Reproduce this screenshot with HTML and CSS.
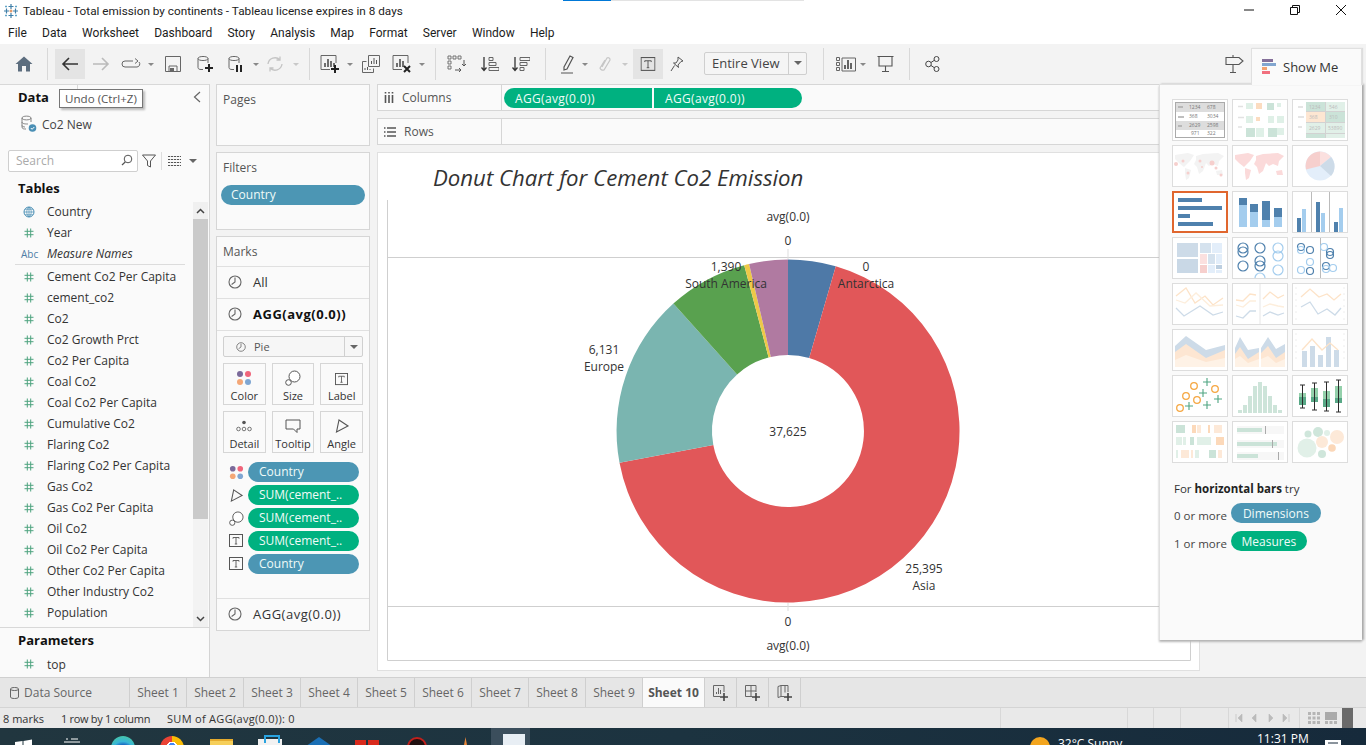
FILE: index.html
```html
<!DOCTYPE html>
<html lang="en">
<head>
<meta charset="utf-8">
<title>Tableau</title>
<link rel="stylesheet" href="styles.css">
</head>
<body>
<svg class="defs" width="0" height="0">
  <symbol id="i-pie" viewBox="0 0 14 14"><circle cx="7" cy="7" r="6" fill="none" stroke="#666" stroke-width="1.1"/><path d="M7 2.500V7L3.600 9.500" fill="none" stroke="#666" stroke-width="1.1"/></symbol>
  <symbol id="i-t" viewBox="0 0 14 14"><rect x=".5" y=".5" width="13" height="12" fill="none" stroke="#555"/><path d="M4 3.500h6M7 3.500v6.500M5.800 10h2.400M4 3.500v1.200M10 3.500v1.200" fill="none" stroke="#555" stroke-width=".9"/></symbol>
  <symbol id="i-dots" viewBox="0 0 16 16"><circle cx="4" cy="4" r="3" fill="#7b6a9a"/><circle cx="12" cy="4" r="3" fill="#f0657b"/><circle cx="4" cy="12" r="3" fill="#f4a777"/><circle cx="12" cy="12" r="3" fill="#7fa6d2"/></symbol>
  <symbol id="i-size" viewBox="0 0 16 16"><circle cx="9.500" cy="6.500" r="5.500" fill="#fff" stroke="#555"/><circle cx="3.500" cy="12.500" r="2.800" fill="#fff" stroke="#555"/></symbol>
  <symbol id="i-angle" viewBox="0 0 16 16"><path d="M5 2L14 8L2.500 14Z" fill="none" stroke="#555" stroke-width="1.100"/></symbol>
  <symbol id="i-hash" viewBox="0 0 10 10"><path d="M3.300.5v9M6.700.5v9M.5 3.300h9M.5 6.700h9" fill="none" stroke="#4ea37f" stroke-width="1"/></symbol>
  <symbol id="i-world" viewBox="0 0 56 42"><path d="M3 10L16 8L22 10L18 16L14 20L12 22L7 18L3 14ZM13 23L19 25L17 33L14 35L13 28ZM24 11L31 9L46 8L52 11L47 16L46 21L41 19L37 21L34 18L31 26L27 29L25 22L22 19L24 15ZM44 26L50 25L51 30L45 30Z"/></symbol>
</svg>

<header class="titlebar">
  <div class="progress"><span class="progress-fill"></span></div>
  <svg class="app-logo" viewBox="0 0 16 16" width="16" height="16"><path d="M8 1v5M5.500 3.500h5M8 10v5M5.500 12.500h5M1 8h5M3.500 5.500v5M10 8h5M12.500 5.500v5" stroke="#3f7fa8" stroke-width="1.200"/><path d="M3 2.500v2M2 3.500h2M13 2.500v2M12 3.500h2M3 11.500v2M2 12.500h2M13 11.500v2M12 12.500h2" stroke="#5aa0c4" stroke-width=".9"/><path d="M6.500 8h3M8 6.500v3" stroke="#d9783a" stroke-width="1"/></svg>
  <span class="app-title">Tableau - Total emission by continents - Tableau license expires in 8 days</span>
  <div class="win-controls">
    <svg width="12" height="12" viewBox="0 0 12 12"><path d="M1 6h10" stroke="#111" stroke-width="1"/></svg>
    <svg width="12" height="12" viewBox="0 0 12 12"><path d="M1.500 3.500h7v7h-7zM3.500 3.500v-2h7v7h-2" fill="none" stroke="#111"/></svg>
    <svg width="12" height="12" viewBox="0 0 12 12"><path d="M1 1l10 10M11 1L1 11" stroke="#111" stroke-width="1"/></svg>
  </div>
</header>

<nav class="menubar">
  <span>File</span><span>Data</span><span>Worksheet</span><span>Dashboard</span><span>Story</span><span>Analysis</span><span>Map</span><span>Format</span><span>Server</span><span>Window</span><span>Help</span>
</nav>

<div class="toolbar">
  <div class="tool w30 first"><svg width="18" height="16" viewBox="0 0 18 16"><path d="M9 .5L17.500 8H15v7.500h-4V10H7v5.500H3V8H.5Z" fill="#5c6d7e"/></svg></div>
  <i class="sep m8"></i>
  <div class="tool w30 hover m7"><svg width="18" height="16" viewBox="0 0 18 16"><path d="M17 8H2M8 2L2 8l6 6" fill="none" stroke="#333" stroke-width="1.600"/></svg></div>
  <div class="tool w32"><svg width="18" height="16" viewBox="0 0 18 16"><path d="M1 8h15M10 2l6 6-6 6" fill="none" stroke="#bbb" stroke-width="1.600"/></svg></div>
  <div class="tool w28"><svg width="20" height="12" viewBox="0 0 20 12"><path d="M12 3H4a3 3 0 0 0 0 6h12a3 3 0 0 0 2-5M14 .5L17 3l-3 2.500" fill="none" stroke="#666"/></svg></div>
  <div class="tool w12"><b class="caret"></b></div>
  <div class="tool w32"><svg width="16" height="16" viewBox="0 0 16 16"><path d="M.5.500h15v15H.5zM4 15.500V10h8v5.500" fill="none" stroke="#666"/><rect x="5" y="12" width="4" height="3.500" fill="#666"/></svg></div>
  <div class="tool w32"><svg width="16" height="18" viewBox="0 0 16 18"><path d="M1 3.500v9c0 1.500 1.500 2 3 2h2M11 3.500V8M1 3.500C1 .8 11 .8 11 3.500S1 6.200 1 3.500Z" fill="none" stroke="#666"/><path d="M12 9v8M8 13h8" stroke="#222" stroke-width="2"/></svg></div>
  <div class="tool w30"><svg width="16" height="18" viewBox="0 0 16 18"><path d="M1 3.500v9c0 1.500 1.500 2 3 2h2M11 3.500V8M1 3.500C1 .8 11 .8 11 3.500S1 6.200 1 3.500Z" fill="none" stroke="#666"/><path d="M9 10v7M13 10v7" stroke="#222" stroke-width="2"/></svg></div>
  <div class="tool w10"><b class="caret"></b></div>
  <div class="tool w28"><svg width="18" height="16" viewBox="0 0 18 16"><path d="M2 8a7 7 0 0 1 12-4M16 8a7 7 0 0 1-12 4M14 .5V4h-3.500M4 15.500V12h3.500" fill="none" stroke="#c4c4c4" stroke-width="1.300"/></svg></div>
  <div class="tool w14"><b class="caret pale"></b></div>
  <i class="sep m6"></i>
  <div class="tool w32 m4"><svg width="20" height="20" viewBox="0 0 20 20"><path d="M16 9V1.500H1v14h9" fill="none" stroke="#666"/><path d="M5 13V9M8 13V5M11 13V7M14 13V9" stroke="#444" stroke-width="1.500"/><path d="M15 11v8M11 15h8" stroke="#222" stroke-width="2"/></svg></div>
  <div class="tool w8"><b class="caret"></b></div>
  <div class="tool w34"><svg width="18" height="18" viewBox="0 0 18 18"><path d="M6.500.5h11v11h-11zM.5 6.500h4M.5 6.500v11h11v-4" fill="none" stroke="#666"/><path d="M9.500 9V6M12 9V3M14.500 9V5M3 15v-2M5.500 15v-3M8 15v-1" stroke="#555"/></svg></div>
  <div class="tool w28"><svg width="20" height="20" viewBox="0 0 20 20"><path d="M16 9V1.500H1v14h9" fill="none" stroke="#666"/><path d="M5 13V9M8 13V5M11 13V7" stroke="#444" stroke-width="1.500"/><path d="M12 12l6 6M18 12l-6 6" stroke="#222" stroke-width="2"/></svg></div>
  <div class="tool w12"><b class="caret"></b></div>
  <i class="sep m7"></i>
  <div class="tool w32 m5"><svg width="20" height="18" viewBox="0 0 20 18"><path d="M1 1h3v3H1zM6 1h3v3H6zM11 1h3v3h-3zM1 6h3v3H1zM1 11h3v3H1z" fill="none" stroke="#666" stroke-width=".9"/><path d="M17 5v6l-2-2M19 9l-2 2M8 15h6l-2-2M12 17l2-2" fill="none" stroke="#555"/></svg></div>
  <div class="tool w34"><svg width="18" height="16" viewBox="0 0 18 16"><path d="M3 1v13M.5 11.500L3 14.500l2.500-3" fill="none" stroke="#333" stroke-width="1.300"/><path d="M8 1.500h4v3H8zM8 6.500h7v3H8zM8 11.500h10v3H8z" fill="none" stroke="#666"/></svg></div>
  <div class="tool w28"><svg width="18" height="16" viewBox="0 0 18 16"><path d="M3 1v13M.5 11.500L3 14.500l2.500-3" fill="none" stroke="#333" stroke-width="1.300"/><path d="M8 1.500h10v3H8zM8 6.500h7v3H8zM8 11.500h4v3H8z" fill="none" stroke="#666"/></svg></div>
  <i class="sep m10"></i>
  <div class="tool w28 m8"><svg width="14" height="20" viewBox="0 0 14 20"><path d="M3 13L9 2l3 1.500L6 15l-3 1zM0 19h12" fill="none" stroke="#555" stroke-width="1.200"/></svg></div>
  <div class="tool w6"><b class="caret"></b></div>
  <div class="tool w34"><svg width="12" height="18" viewBox="0 0 12 18"><path d="M3 12L8 3a2 2 0 0 1 3 2L5 15a3 3 0 0 1-4-2L6 5" fill="none" stroke="#c6c6c6" stroke-width="1.200"/></svg></div>
  <div class="tool w6"><b class="caret pale"></b></div>
  <div class="tool w30 hover m5"><svg width="16" height="15" viewBox="0 0 14 14"><use href="#i-t"/></svg></div>
  <div class="tool w28"><svg width="14" height="16" viewBox="0 0 14 16"><path d="M8 1l5 4-2 .5-3 3.500.5 2.500L3.500 7 6 7l2-3zM4.500 9.500L1 15" fill="none" stroke="#555"/></svg></div>
  <div class="select m13"><span>Entire View</span><span class="select-arrow"><b class="caret strong"></b></span></div>
  <i class="sep m16"></i>
  <div class="tool w28 m8"><svg width="20" height="15" viewBox="0 0 20 15"><path d="M.5.500h3v3h-3zM.5 5.500h3v3h-3zM.5 10.500h3v3h-3zM6 1h13.500v13H6z" fill="none" stroke="#666"/><path d="M9 12V8M12 12V3M15 12V6" stroke="#555" stroke-width="1.800"/></svg></div>
  <div class="tool w6"><b class="caret"></b></div>
  <div class="tool w38"><svg width="17" height="16" viewBox="0 0 17 16"><path d="M.5.500h16M2 .5v9.500h13V.5M8.500 10v5M5 15.500h7" fill="none" stroke="#555" stroke-width="1.100"/></svg></div>
  <i class="sep m5"></i>
  <div class="tool w32 m6"><svg width="15" height="16" viewBox="0 0 15 16"><circle cx="3.500" cy="8" r="2.800" fill="none" stroke="#444"/><circle cx="11.500" cy="3" r="2.500" fill="none" stroke="#444"/><circle cx="11.500" cy="13" r="2.500" fill="none" stroke="#444"/><path d="M6 6.500L9.300 4.300M6 9.500l3.300 2.200" stroke="#444"/></svg></div>
  <div class="tool w28 push"><svg width="19" height="20" viewBox="0 0 19 20"><path d="M1 3.500h13l4 3.500-4 3.500H1zM8 1v2.500M8 10.500V18M5 18.500h6" fill="none" stroke="#555" stroke-width="1.100"/></svg></div>
  <div class="showme-tab"><svg width="15" height="16" viewBox="0 0 15 16"><rect width="11" height="3" fill="#85709a"/><rect y="4" width="14" height="3" fill="#82a6cf"/><rect y="8" width="5" height="3" fill="#f3a270"/><rect y="12" width="8" height="3" fill="#f1707e"/></svg><span>Show Me</span></div>
</div>

<main class="main">
  <aside class="data-pane">
    <div class="data-head"><b>Data</b><svg width="8" height="12" viewBox="0 0 8 12"><path d="M7 1L1.500 6 7 11" fill="none" stroke="#666" stroke-width="1.200"/></svg></div>
    <div class="source">
      <svg width="18" height="18" viewBox="0 0 18 18"><path d="M2 3v9c0 2 2 2 4 2M11 3v4M2 3c0-2.500 9-2.500 9 0S2 5.500 2 3ZM2 7c0 2 4 2 6 2M2 10.500c0 1 2 1.500 3 1.500" fill="none" stroke="#777" stroke-width=".9"/><circle cx="12.500" cy="13" r="3.800" fill="#4a8fb5"/><path d="M10.800 13l1.300 1.300 2.200-2.300" fill="none" stroke="#fff"/></svg>
      <span>Co2 New</span>
    </div>
    <div class="search-row">
      <div class="search"><span>Search</span><svg width="12" height="12" viewBox="0 0 12 12"><circle cx="7" cy="5" r="3.800" fill="none" stroke="#555"/><path d="M4.200 8L1 11" stroke="#555" stroke-width="1.200"/></svg></div>
      <svg class="funnel" width="14" height="14" viewBox="0 0 14 14"><path d="M.5 1h13L8.500 7v6l-3-1.500V7Z" fill="none" stroke="#555"/></svg>
      <i class="mini-sep"></i>
      <svg class="listing" width="13" height="10" viewBox="0 0 13 10"><path d="M0 .5h13M0 3.500h13M0 6.500h13M0 9.500h13" stroke="#555" stroke-dasharray="2.200 .8"/></svg>
      <b class="caret strong"></b>
    </div>
    <h3 class="tables">Tables</h3>
    <div class="fields">
      <ul class="field-list">
        <li><svg width="12" height="12" viewBox="0 0 12 12" class="f-ic"><circle cx="6" cy="6" r="5" fill="none" stroke="#4a8fb5"/><path d="M1 6h10M6 1v10M2 3.200h8M2 8.800h8M6 1C3 3.500 3 8.500 6 11M6 1c3 2.500 3 7.500 0 10" fill="none" stroke="#4a8fb5" stroke-width=".7"/></svg>Country</li>
        <li><svg class="f-ic hash"><use href="#i-hash"/></svg>Year</li>
        <li class="last"><span class="abc">Abc</span><em>Measure Names</em></li>
        <li><svg class="f-ic hash"><use href="#i-hash"/></svg>Cement Co2 Per Capita</li>
        <li><svg class="f-ic hash"><use href="#i-hash"/></svg>cement_co2</li>
        <li><svg class="f-ic hash"><use href="#i-hash"/></svg>Co2</li>
        <li><svg class="f-ic hash"><use href="#i-hash"/></svg>Co2 Growth Prct</li>
        <li><svg class="f-ic hash"><use href="#i-hash"/></svg>Co2 Per Capita</li>
        <li><svg class="f-ic hash"><use href="#i-hash"/></svg>Coal Co2</li>
        <li><svg class="f-ic hash"><use href="#i-hash"/></svg>Coal Co2 Per Capita</li>
        <li><svg class="f-ic hash"><use href="#i-hash"/></svg>Cumulative Co2</li>
        <li><svg class="f-ic hash"><use href="#i-hash"/></svg>Flaring Co2</li>
        <li><svg class="f-ic hash"><use href="#i-hash"/></svg>Flaring Co2 Per Capita</li>
        <li><svg class="f-ic hash"><use href="#i-hash"/></svg>Gas Co2</li>
        <li><svg class="f-ic hash"><use href="#i-hash"/></svg>Gas Co2 Per Capita</li>
        <li><svg class="f-ic hash"><use href="#i-hash"/></svg>Oil Co2</li>
        <li><svg class="f-ic hash"><use href="#i-hash"/></svg>Oil Co2 Per Capita</li>
        <li><svg class="f-ic hash"><use href="#i-hash"/></svg>Other Co2 Per Capita</li>
        <li><svg class="f-ic hash"><use href="#i-hash"/></svg>Other Industry Co2</li>
        <li><svg class="f-ic hash"><use href="#i-hash"/></svg>Population</li>
      </ul>
      <div class="scrollbar">
        <div class="sb-btn"><svg width="9" height="6" viewBox="0 0 9 6"><path d="M1 5l3.500-3.500L8 5" fill="none" stroke="#444" stroke-width="1.500"/></svg></div>
        <div class="sb-thumb"></div>
        <div class="sb-btn bottom"><svg width="9" height="6" viewBox="0 0 9 6"><path d="M1 1l3.500 3.500L8 1" fill="none" stroke="#444" stroke-width="1.500"/></svg></div>
      </div>
    </div>
    <div class="params">
      <h3>Parameters</h3>
      <div class="param"><svg class="f-ic hash"><use href="#i-hash"/></svg>top</div>
    </div>
  </aside>

  <section class="cards">
    <div class="card pages"><h4>Pages</h4></div>
    <div class="card filters"><h4>Filters</h4><div class="pill blue wide">Country</div></div>
    <div class="card marks">
      <h4 class="marks-title">Marks</h4>
      <div class="mark-row"><svg class="pie-ic"><use href="#i-pie"/></svg><span>All</span></div>
      <div class="mark-row bold"><svg class="pie-ic"><use href="#i-pie"/></svg><span class="agg">AGG(avg(0.0))</span></div>
      <div class="mark-select"><svg class="pie-small"><use href="#i-pie"/></svg><span class="ms-label">Pie</span><span class="ms-arrow"><b class="caret strong"></b></span></div>
      <div class="mark-buttons">
        <div class="mbtn"><svg class="mb-ic"><use href="#i-dots"/></svg><span>Color</span></div>
        <div class="mbtn"><svg class="mb-ic"><use href="#i-size"/></svg><span>Size</span></div>
        <div class="mbtn"><svg class="mb-ic t"><use href="#i-t"/></svg><span>Label</span></div>
        <div class="mbtn"><svg class="mb-ic" viewBox="0 0 16 16"><circle cx="8" cy="4.500" r="1.800" fill="#555"/><circle cx="2.500" cy="11" r="1.800" fill="none" stroke="#555" stroke-width=".8"/><circle cx="8" cy="11" r="1.800" fill="none" stroke="#555" stroke-width=".8"/><circle cx="13.500" cy="11" r="1.800" fill="none" stroke="#555" stroke-width=".8"/></svg><span>Detail</span></div>
        <div class="mbtn"><svg class="mb-ic" viewBox="0 0 16 16"><path d="M1 2h14v9h-3v3.500L8.500 11H1Z" fill="none" stroke="#555"/></svg><span>Tooltip</span></div>
        <div class="mbtn"><svg class="mb-ic"><use href="#i-angle"/></svg><span>Angle</span></div>
      </div>
      <div class="encodings">
        <div class="enc"><svg class="enc-ic"><use href="#i-dots"/></svg><div class="pill blue">Country</div></div>
        <div class="enc"><svg class="enc-ic"><use href="#i-angle"/></svg><div class="pill green">SUM(cement_..</div></div>
        <div class="enc"><svg class="enc-ic"><use href="#i-size"/></svg><div class="pill green">SUM(cement_..</div></div>
        <div class="enc"><svg class="enc-ic t"><use href="#i-t"/></svg><div class="pill green">SUM(cement_..</div></div>
        <div class="enc"><svg class="enc-ic t"><use href="#i-t"/></svg><div class="pill blue">Country</div></div>
      </div>
      <div class="mark-row bottom"><svg class="pie-ic"><use href="#i-pie"/></svg><span class="agg">AGG(avg(0.0))</span></div>
    </div>
  </section>

  <section class="workspace">
    <div class="shelf"><div class="shelf-label"><svg width="10" height="11" viewBox="0 0 10 11"><path d="M1.500 3v8M5 3v8M8.500 3v8M1.500 0v1.500M5 0v1.500M8.500 0v1.500" stroke="#555" stroke-width="1.600"/></svg><span>Columns</span></div><div class="shelf-pills"><div class="pill green joined-l">AGG(avg(0.0))</div><div class="pill green joined-r">AGG(avg(0.0))</div></div></div>
    <div class="shelf rows"><div class="shelf-label"><svg width="12" height="10" viewBox="0 0 12 10"><path d="M3 1h9M3 5h9M3 9h9M0 1h1.500M0 5h1.500M0 9h1.500" stroke="#555" stroke-width="1.400"/></svg><span>Rows</span></div></div>
    <div class="viz">
      <svg class="viz-svg" viewBox="377 152 823 519" width="823" height="519">
        <text class="viz-title" x="433" y="186">Donut Chart for Cement Co2 Emission</text>
        <path d="M387.500 200V660.500H1190.500V640M387 257.500H1199M387 606.500H1199" fill="none" stroke="#cfcfcf"/>
        <path d="M788 249v10M788 603v8" stroke="#ddd"/>
        <path fill="#4e79a7" d="M788 259.500A171.500 171.500 0 0 1 835.800 266.300L809.200 358A76 76 0 0 0 788 355Z"/>
        <path fill="#e15759" d="M835.800 266.300A171.500 171.500 0 1 1 619.500 462.800L713.300 445.100A76 76 0 1 0 809.200 358Z"/>
        <path fill="#7ab5b0" d="M619.500 462.800A171.500 171.500 0 0 1 673.400 303.600L737.100 374.500A76 76 0 0 0 713.300 445.100Z"/>
        <path fill="#59a14f" d="M673.400 303.600A171.500 171.500 0 0 1 744.200 265.200L768.600 357.500A76 76 0 0 0 737.100 374.500Z"/>
        <path fill="#edc948" d="M744.200 265.200A171.500 171.500 0 0 1 749.100 264L770.800 357A76 76 0 0 0 768.600 357.500Z"/>
        <path fill="#b07aa1" d="M749.100 264A171.500 171.500 0 0 1 788 259.500L788 355A76 76 0 0 0 770.800 357Z"/>
        <g class="viz-label">
          <text x="788" y="221">avg(0.0)</text><text x="788" y="245">0</text>
          <text x="726" y="271">1,390</text><text x="726" y="288">South America</text>
          <text x="866" y="271">0</text><text x="866" y="288">Antarctica</text>
          <text x="604" y="354">6,131</text><text x="604" y="371">Europe</text>
          <text x="788" y="436">37,625</text>
          <text x="924" y="573">25,395</text><text x="924" y="590">Asia</text>
          <text x="788" y="626">0</text><text x="788" y="650">avg(0.0)</text>
        </g>
      </svg>
    </div>
  </section>

  <div class="tooltip">Undo (Ctrl+Z)</div>

  <aside class="showme">
    <div class="thumbs">
      <svg class="thumb" viewBox="0 0 56 42"><rect x="3" y="3" width="50" height="36" fill="#fff"/><path d="M3 3h50v10H3zM3 22h50v9H3z" fill="#ddd"/><rect x="3.500" y="3.500" width="49" height="35" fill="none" stroke="#aaa"/><path d="M6 8h5M6 18h6M6 27h4" stroke="#aaa" stroke-width="1.500"/><g class="tt"><text x="17" y="10">1234</text><text x="35" y="10">678</text><text x="17" y="19">368</text><text x="35" y="19">3034</text><text x="17" y="28">2629</text><text x="35" y="28">2598</text><text x="19" y="36">971</text><text x="35" y="36">322</text></g></svg>
      <svg class="thumb" viewBox="0 0 56 42"><g fill="#dff0e7"><rect x="14" y="4" width="7" height="6"/><rect x="45" y="4" width="4" height="4"/><rect x="14" y="17" width="7" height="7"/><rect x="36" y="17" width="6" height="7"/><rect x="45" y="17" width="7" height="7"/><rect x="24" y="29" width="8" height="9"/><rect x="45" y="29" width="7" height="7"/></g><g fill="#cbe3d8"><rect x="35" y="4" width="7" height="7"/><rect x="14" y="29" width="9" height="9"/><rect x="36" y="29" width="9" height="9"/></g><g fill="#fbdcc0"><rect x="24" y="4" width="6" height="6"/><rect x="24" y="18" width="4" height="4"/></g><path d="M6 7.500h5M6 18.500h6M6 28h4" stroke="#e2e2e2" stroke-width="1.500"/></svg>
      <svg class="thumb" viewBox="0 0 56 42"><rect x="14" y="3" width="39" height="36" fill="#d2d2d2"/><rect x="14" y="3" width="19" height="9" fill="#cbe3d8"/><rect x="34" y="3" width="19" height="9" fill="#e1f0e8"/><rect x="14" y="13" width="19" height="10" fill="#fde6d2"/><rect x="34" y="13" width="19" height="10" fill="#cbe3d8"/><rect x="14" y="24" width="19" height="10" fill="#e1f0e8"/><rect x="34" y="24" width="19" height="10" fill="#e1f0e8"/><rect x="14" y="35" width="19" height="4" fill="#cbe3d8"/><rect x="34" y="35" width="19" height="4" fill="#e1f0e8"/><path d="M6 8h5M6 18h6M6 28h4" stroke="#ddd" stroke-width="1.500"/><g class="tt pale"><text x="17" y="10">1234</text><text x="37" y="10">546</text><text x="17" y="20">368</text><text x="37" y="20">310</text><text x="17" y="31">2629</text><text x="36" y="31">53890</text></g></svg>
      <svg class="thumb" viewBox="0 0 56 42"><use href="#i-world" fill="#f3f3f3"/><g fill="#f6cfcd"><circle cx="4" cy="19" r="2"/><circle cx="11" cy="16" r="1.500"/><circle cx="40" cy="18" r="2.500"/><circle cx="28" cy="16" r="1.500"/><circle cx="44" cy="23" r="1.500"/><circle cx="16" cy="28" r="1.500"/><circle cx="49" cy="30" r="1.500"/><circle cx="30" cy="22" r="1"/></g></svg>
      <svg class="thumb" viewBox="0 0 56 42"><use href="#i-world" fill="#fbdada"/></svg>
      <svg class="thumb" viewBox="0 0 56 42"><circle cx="28" cy="21" r="14.500" fill="#e3eefa"/><path d="M28 21V6.500A14.500 14.500 0 0 1 39 12Z" fill="#fbe0df"/><path d="M28 21V6.500A14.500 14.500 0 0 0 14 24.500Z" fill="#f6cfcd"/><path d="M28 21L39 12A14.500 14.500 0 0 1 39 31Z" fill="#cddbe8"/></svg>
      <svg class="thumb selected" viewBox="0 0 56 42"><g fill="#4f81ad"><rect x="6" y="7" width="24" height="4"/><rect x="6" y="15" width="44" height="4"/><rect x="6" y="23" width="12" height="4"/><rect x="6" y="31" width="35" height="4"/></g></svg>
      <svg class="thumb" viewBox="0 0 56 42"><g fill="#a4cdee"><rect x="7" y="14" width="8" height="22"/><rect x="18" y="21" width="8" height="15"/><rect x="30" y="29" width="8" height="7"/><rect x="42" y="26" width="8" height="10"/></g><g fill="#4f81ad"><rect x="7" y="7" width="8" height="7"/><rect x="18" y="13" width="8" height="8"/><rect x="30" y="10" width="8" height="19"/><rect x="42" y="17" width="8" height="9"/></g></svg>
      <svg class="thumb" viewBox="0 0 56 42"><path d="M19.500 1v40M37.500 1v40" stroke="#bbb"/><g fill="#4f81ad"><rect x="5" y="27" width="4" height="14"/><rect x="24" y="11" width="4" height="30"/><rect x="42" y="31" width="4" height="10"/></g><g fill="#a4cdee"><rect x="10" y="18" width="4" height="23"/><rect x="29" y="22" width="4" height="19"/><rect x="47" y="17" width="4" height="24"/></g></svg>
      <svg class="thumb" viewBox="0 0 56 42"><rect x="5" y="6" width="21" height="14" fill="#cddbe8"/><rect x="5" y="22" width="21" height="14" fill="#c9d8e6"/><rect x="28" y="6" width="11" height="10" fill="#d5e2ee"/><rect x="40" y="6" width="10" height="10" fill="#e3eefa"/><rect x="28" y="17" width="7" height="10" fill="#fbe0df"/><rect x="36" y="17" width="7" height="10" fill="#d5e2ee"/><rect x="44" y="17" width="6" height="10" fill="#e3eefa"/><rect x="28" y="28" width="7" height="8" fill="#f6cfcd"/><rect x="36" y="28" width="7" height="8" fill="#e3eefa"/><rect x="44" y="28" width="6" height="4" fill="#bdcfe0"/><rect x="44" y="33" width="6" height="3" fill="#e3eefa"/></svg>
      <svg class="thumb" viewBox="0 0 56 42"><g fill="none" stroke-width="1.200"><g stroke="#4f81ad"><circle cx="11" cy="11" r="5"/><circle cx="11" cy="15" r="5"/><circle cx="28" cy="11" r="5"/><circle cx="11" cy="29" r="5"/><circle cx="28" cy="24" r="5"/><circle cx="28" cy="29" r="5"/></g><g stroke="#a4cdee"><circle cx="46" cy="11" r="5"/><circle cx="46" cy="19" r="5"/><circle cx="46" cy="33" r="5"/><circle cx="28" cy="41" r="5"/></g></g></svg>
      <svg class="thumb" viewBox="0 0 56 42"><path d="M28.500 1v40" stroke="#bbb"/><g fill="none" stroke-width="1.200"><g stroke="#4f81ad"><circle cx="9" cy="10" r="3.500"/><circle cx="18" cy="13" r="3.500"/><circle cx="18" cy="34" r="3.500"/><circle cx="38" cy="15" r="3.500"/><circle cx="38" cy="18" r="3.500"/><circle cx="34" cy="29" r="3.500"/></g><g stroke="#a4cdee"><circle cx="9" cy="13" r="3.500"/><circle cx="9" cy="33" r="3.500"/><circle cx="18" cy="25" r="3.500"/><circle cx="32" cy="10" r="3.500"/><circle cx="34" cy="32" r="3.500"/><circle cx="41" cy="31" r="3.500"/></g></g></svg>

      <svg class="thumb" viewBox="0 0 56 42"><g fill="none" stroke-width="1.300"><path d="M4 13L14 5L23 20L33 13L41 22L51 15" stroke="#fde3c8"/><path d="M4 17L13 20L24 10L38 23L51 22" stroke="#fdeedc"/><path d="M4 25L12 33L28 23L41 32L51 29" stroke="#cddbe8"/></g></svg>
      <svg class="thumb" viewBox="0 0 56 42"><path d="M28 1v40" stroke="#e6e6e6"/><g fill="none" stroke-width="1.300"><path d="M4 17L11 18L18 11L24 12M31 16L38 9L46 15L52 12" stroke="#fde3c8"/><path d="M4 22L11 24L18 18L24 18M31 24L38 21L46 23L52 24" stroke="#fdeedc"/><path d="M4 33L11 35L18 28L24 28M31 33L38 29L46 32L52 30" stroke="#cddbe8"/></g></svg>
      <svg class="thumb" viewBox="0 0 56 42"><path d="M3 5h2M3 11h2M3 17h2M3 23h2M3 29h2M51 5h2M51 11h2M51 17h2M51 23h2M51 29h2M3 36h2M51 36h2" stroke="#eee"/><g fill="none" stroke-width="1.300"><path d="M9 14L18 6L27 14L35 11L42 17L49 11" stroke="#fde3c8"/><path d="M9 24L18 19L26 31L35 26L43 32L49 25" stroke="#cddbe8"/></g></svg>

      <svg class="thumb" viewBox="0 0 56 42"><path d="M3 17L14 7L34 21L53 16V38H3Z" fill="#cddbe8"/><path d="M3 23L14 15L34 29L53 21V38H3Z" fill="#fde6d2"/><path d="M3 31L14 26L34 33L53 29V38H3Z" fill="#fef2e6"/></svg>
      <svg class="thumb" viewBox="0 0 56 42"><path d="M3 19L8 8L16 21L27 19V38H3ZM29 19L36 8L44 20L53 15V38H29Z" fill="#cddbe8"/><path d="M3 25L8 18L16 30L27 23V38H3ZM29 24L36 17L44 29L53 23V38H29Z" fill="#fde6d2"/><path d="M3 30L8 27L16 34L27 30V38H3ZM29 30L36 27L44 34L53 30V38H29Z" fill="#fef2e6"/></svg>
      <svg class="thumb" viewBox="0 0 56 42"><g fill="#cddbe8"><rect x="10" y="22" width="5" height="16"/><rect x="18" y="17" width="5" height="21"/><rect x="26" y="26" width="5" height="12"/><rect x="34" y="8" width="5" height="30"/><rect x="42" y="21" width="5" height="17"/></g><path d="M3 5h2M3 11h2M3 17h2M3 23h2M3 29h2M51 5h2M51 11h2M51 17h2M51 23h2M51 29h2" stroke="#eee"/><path d="M10 21L20 10L30 21L38 14L46 21" fill="none" stroke="#fde3c8" stroke-width="1.300"/></svg>

      <svg class="thumb" viewBox="0 0 56 42"><g fill="none" stroke="#f5a742" stroke-width="1.300"><circle cx="22" cy="11" r="3.300"/><circle cx="43" cy="14" r="3.300"/><circle cx="14" cy="21" r="3.300"/><circle cx="25" cy="25" r="3.300"/><circle cx="8" cy="33" r="3.300"/></g><path d="M35 3v8M31 7h8M31 14v8M27 18h8M46 20v8M42 24h8M17 27v8M13 31h8M35 26v8M31 30h8" stroke="#4fa582" stroke-width="1.100"/></svg>
      <svg class="thumb" viewBox="0 0 56 42"><g fill="#cde4d9"><rect x="6" y="35" width="4" height="3"/><rect x="11" y="30" width="4" height="8"/><rect x="16" y="21" width="4" height="17"/><rect x="21" y="11" width="4" height="27"/><rect x="26" y="7" width="4" height="31"/><rect x="31" y="11" width="4" height="27"/><rect x="36" y="21" width="4" height="17"/><rect x="41" y="30" width="4" height="8"/><rect x="46" y="35" width="4" height="3"/></g></svg>
      <svg class="thumb" viewBox="0 0 56 42"><g fill="#94d0ab"><rect x="7" y="18" width="7" height="4"/><rect x="19" y="13" width="7" height="9"/><rect x="31" y="16" width="7" height="8"/><rect x="43" y="11" width="7" height="12"/></g><g fill="#58a886"><rect x="7" y="22" width="7" height="8"/><rect x="19" y="22" width="7" height="5"/><rect x="31" y="24" width="7" height="8"/><rect x="43" y="23" width="7" height="5"/></g><path d="M10.500 10v23M8 10h5M8 33h5M22.500 8v27M20 8h5M20 35h5M34.500 7v29M32 7h5M32 36h5M46.500 5v32M44 5h5M44 37h5" stroke="#2c2c2c" fill="none" stroke-width="1"/></svg>

      <svg class="thumb" viewBox="0 0 56 42"><g fill="#cbe3d8"><rect x="4" y="4" width="9" height="8"/><rect x="18" y="16" width="4" height="8"/><rect x="37" y="29" width="7" height="8"/></g><g fill="#e1f0e8"><rect x="4" y="16" width="6" height="8"/><rect x="11" y="16" width="3" height="8"/><rect x="25" y="16" width="14" height="8"/><rect x="4" y="29" width="2" height="8"/><rect x="23" y="29" width="4" height="8"/></g><g fill="#fcd9ba"><rect x="20" y="4" width="4" height="8"/><rect x="36" y="4" width="2" height="8"/><rect x="44" y="16" width="8" height="8"/></g><g fill="#fde9d8"><rect x="25" y="4" width="4" height="8"/><rect x="42" y="4" width="8" height="8"/><rect x="9" y="29" width="8" height="8"/><rect x="19" y="29" width="2" height="8"/><rect x="46" y="29" width="4" height="8"/></g></svg>
      <svg class="thumb" viewBox="0 0 56 42"><path d="M5 5h47v8H5zM5 19h47v8H5zM5 31h47v8H5z" fill="#f7f7f7"/><g fill="#cbe3d8"><rect x="5" y="7" width="25" height="4"/><rect x="5" y="21" width="40" height="4"/><rect x="5" y="33" width="21" height="4"/></g><path d="M33.500 5v8M40.500 19v8M46.500 31v8" stroke="#aaa" stroke-width="1"/></svg>
      <svg class="thumb" viewBox="0 0 56 42"><circle cx="15" cy="27" r="9.500" fill="#e1f0e8"/><circle cx="26" cy="11" r="5" fill="#cfe6db"/><circle cx="16" cy="13" r="3.500" fill="#cfe6db"/><circle cx="35" cy="12" r="3" fill="#e1f0e8"/><circle cx="45" cy="16" r="7" fill="#fde9d8"/><circle cx="30" cy="21" r="6" fill="#fde9d8"/><circle cx="40" cy="27" r="3.800" fill="#fbd7b8"/><circle cx="30" cy="33" r="4" fill="#cfe6db"/></svg>
    </div>
    <p class="hint">For <b>horizontal bars</b> try</p>
    <div class="need"><span>0 or more</span><div class="pill blue hint-pill">Dimensions</div></div>
    <div class="need"><span>1 or more</span><div class="pill green hint-pill short">Measures</div></div>
  </aside>
</main>

<div class="tabs">
  <div class="tab ds"><svg width="9" height="12" viewBox="0 0 9 12"><path d="M.5 2v8c0 2 8 2 8 0V2M.5 2c0-2 8-2 8 0s-8 2-8 0Z" fill="none" stroke="#666"/></svg><span>Data Source</span></div>
  <div class="tab">Sheet 1</div><div class="tab">Sheet 2</div><div class="tab">Sheet 3</div><div class="tab">Sheet 4</div><div class="tab">Sheet 5</div><div class="tab">Sheet 6</div><div class="tab">Sheet 7</div><div class="tab">Sheet 8</div><div class="tab">Sheet 9</div>
  <div class="tab active">Sheet 10</div>
  <div class="tab add"><svg width="16" height="16" viewBox="0 0 16 16"><path d="M11 7V.5H.5v11H7" fill="none" stroke="#666"/><path d="M3.500 9V7M5.500 9V3M7.500 9V5" stroke="#666"/><path d="M11 8v8M7 12h8" stroke="#444" stroke-width="1.600"/></svg></div>
  <div class="tab add"><svg width="16" height="16" viewBox="0 0 16 16"><path d="M11 7V.5H.5v11H7M.5 6h10.500M6 .5v11" fill="none" stroke="#666"/><path d="M11 8v8M7 12h8" stroke="#444" stroke-width="1.600"/></svg></div>
  <div class="tab add"><svg width="16" height="16" viewBox="0 0 16 16"><path d="M1 1.500L4 .5v11l-3 1zM4 .5h7V7M4 11.500h3M8 .5v7" fill="none" stroke="#666"/><path d="M11 8v8M7 12h8" stroke="#444" stroke-width="1.600"/></svg></div>
</div>

<footer class="status">
  <span class="st-a">8 marks</span><span class="st-b">1 row by 1 column</span><span class="st-c">SUM of AGG(avg(0.0)): 0</span>
  <div class="st-right">
    <i class="st-cell c1"></i><i class="st-cell c2"></i><i class="st-cell c3"></i><i class="st-cell c4"></i>
    <div class="st-nav"><svg width="58" height="8" viewBox="0 0 58 8"><path d="M1 0v8M7 0L3 4l4 4ZM21 0l-4 4 4 4ZM34 0l4 4-4 4ZM48 0l4 4-4 4ZM54 0v8" fill="#bbb" stroke="#bbb" stroke-width=".6"/></svg></div>
    <div class="st-views"><svg width="12" height="12" viewBox="0 0 12 12"><path d="M0 1.500h12M0 6h12M0 10.500h12" stroke="#b5b5b5" stroke-width="3" stroke-dasharray="3 1.500"/></svg><svg width="12" height="12" viewBox="0 0 12 12"><rect width="12" height="8" fill="#aaa"/><path d="M0 10.500h12" stroke="#b5b5b5" stroke-width="3" stroke-dasharray="3 1.500"/></svg><svg width="11" height="20" viewBox="0 0 11 20"><rect width="11" height="20" fill="#6a6a6a"/></svg></div>
  </div>
</footer>

<div class="taskbar">
  <svg class="tb-win" width="17" height="17" viewBox="0 0 17 17"><path d="M0 3l7.500-1v7H0zM8.500 2L17 .5V9H8.500z" fill="#fff"/></svg>
  <svg class="tb-view" width="18" height="14" viewBox="0 0 18 14"><path d="M1 4h16M3 1h2M8 1h7" stroke="#fff"/></svg>
  <i class="tb-ic edge"></i><i class="tb-ic chrome"></i><i class="tb-ic folder"></i><i class="tb-ic store"></i><i class="tb-ic mail"></i><i class="tb-ic red"></i><i class="tb-ic darkred"></i><i class="tb-ic cone"></i>
  <div class="tb-active"><i class="tb-tableau"></i></div>
  <i class="tb-sun"></i><span class="tb-temp">32°C  Sunny</span>
  <span class="tb-clock">11:31 PM</span>
  <svg class="tb-note" width="16" height="14" viewBox="0 0 16 14"><rect width="16" height="14" fill="#fff"/><path d="M3 3h10" stroke="#16293a"/></svg>
</div>
</body>
</html>
```
FILE: styles.css
```css
* { box-sizing: border-box; }
html, body { margin: 0; height: 745px; overflow: hidden; }
body { width: 1366px; background: #f3f3f3; color: #333; font: 12px "Open Sans", "Liberation Sans", sans-serif; position: relative; }
h3, h4, p, ul { margin: 0; padding: 0; }
.defs { position: absolute; }
svg { display: block; flex: none; }

.titlebar { height: 22px; background: #fff; display: flex; align-items: center; padding-left: 3px; position: relative; color: #222; font-family: Roboto, sans-serif; }
.progress { position: absolute; left: 563px; top: 0; width: 241px; height: 1px; background: #e3e3e3; }
.progress-fill { display: block; width: 48px; height: 1px; background: #0078d7; }
.app-logo { margin-right: 4px; }
.app-title { font-size: 11.75px; }
.win-controls { margin-left: auto; display: flex; gap: 34px; padding-right: 19px; margin-top: -2px; }

.menubar { height: 22px; background: #fff; display: flex; align-items: center; padding-left: 8px; gap: 15.2px; font: 12px Roboto, sans-serif; color: #1c1c1c; }

.toolbar { height: 40px; background: #f3f3f3; display: flex; align-items: center; padding-right: 4px; }
.tool { height: 30px; display: flex; align-items: center; justify-content: center; flex: none; }
.first { margin-left: 9px; }
.hover { background: #e4e4e4; }
.w6 { width: 6px; } .w8 { width: 8px; } .w10 { width: 10px; } .w12 { width: 12px; } .w14 { width: 14px; }
.w28 { width: 28px; } .w30 { width: 30px; } .w32 { width: 32px; } .w34 { width: 34px; } .w38 { width: 38px; }
.sep { width: 1px; height: 32px; background: #d8d8d8; flex: none; }
.m4 { margin-left: 4px; } .m5 { margin-left: 5px; } .m6 { margin-left: 6px; } .m7 { margin-left: 7px; } .m8 { margin-left: 8px; } .m10 { margin-left: 10px; } .m13 { margin-left: 13px; } .m16 { margin-left: 16px; }
.caret { display: block; width: 0; height: 0; border: 3px solid transparent; border-top: 3px solid #888; border-bottom: 0; flex: none; }
.caret.pale { border-top-color: #c8c8c8; }
.caret.strong { border-left-width: 4px; border-right-width: 4px; border-top: 4px solid #666; }
.select { width: 103px; height: 23px; border: 1px solid #cfcfcf; border-radius: 2px; display: flex; align-items: center; background: #f5f5f5; font-size: 13px; color: #444; flex: none; margin-top: -2px; }
.select span:first-child { flex: 1; padding-left: 7px; white-space: nowrap; }
.select-arrow { width: 18px; height: 21px; border-left: 1px solid #cfcfcf; display: flex; align-items: center; justify-content: center; }
.push { margin-left: auto; }
.showme-tab { width: 111px; height: 37px; margin-top: 4px; margin-left: 3px; background: #fafafa; border: 1px solid #e0e0e0; border-bottom: 0; display: flex; align-items: center; gap: 6px; padding: 0 0 0 10px; font-size: 13px; color: #333; box-shadow: 1px 0 1px #ddd; position: relative; z-index: 3; }

.main { height: 593px; display: flex; position: relative; background: #f3f3f3; }
.data-pane { width: 210px; background: #fafafa; border-right: 1px solid #d4d4d4; border-top: 1px solid #d8d8d8; flex: none; position: relative; }
.data-head { height: 24px; display: flex; align-items: center; justify-content: space-between; padding: 0 8px 0 18px; font-size: 13px; color: #111; position: relative; }
.data-head::after { content: ""; position: absolute; left: 77px; top: 0; width: 1px; height: 5px; background: #d8d8d8; }
.source { height: 32px; display: flex; align-items: center; padding: 0 0 2px 20px; gap: 4px; color: #444; margin-bottom: 9px; }
.search-row { height: 22px; display: flex; align-items: center; padding-left: 8px; }
.search { width: 130px; height: 22px; border: 1px solid #cfcfcf; border-radius: 2px; background: #fff; display: flex; align-items: center; justify-content: space-between; padding: 0 4px 2px 7px; color: #aaa; }
.funnel { margin-left: 4px; }
.mini-sep { width: 1px; height: 18px; background: #ddd; margin: 0 6px 0 5px; }
.listing { margin-right: 8px; }
.tables { font-size: 13px; font-weight: 700; color: #111; padding: 7px 0 0 18px; height: 30px; line-height: 18px; }
.fields { display: flex; height: 425px; }
.field-list { list-style: none; width: 193px; flex: none; padding-left: 15px; }
.field-list li { height: 21px; display: flex; align-items: center; color: #333; white-space: nowrap; padding-bottom: 2px; }
.field-list li.last { border-bottom: 1px solid #dcdcdc; margin-bottom: 2px; width: 170px; padding-bottom: 1px; }
.field-list em { font-style: italic; }
.f-ic { width: 12px; height: 12px; margin-left: 8px; margin-right: 12px; flex: none; }
.hash { width: 10px; height: 10px; margin-left: 9px; margin-right: 13px; }
.abc { font-size: 10px; color: #4f7ea6; width: 32px; padding-left: 6px; flex: none; }
.scrollbar { width: 15px; background: #f3f3f3; display: flex; flex-direction: column; }
.sb-btn { height: 17px; background: #f0f0f0; display: flex; align-items: center; justify-content: center; flex: none; }
.sb-btn.bottom { margin-top: auto; }
.sb-thumb { height: 300px; background: #cacaca; flex: none; }
.params { border-top: 1px solid #d8d8d8; padding: 3px 0 0 18px; }
.params h3 { font-size: 13px; font-weight: 700; color: #111; height: 22px; line-height: 18px; }
.param { display: flex; align-items: center; height: 22px; margin-left: -3px; }

.cards { width: 154px; margin: 0 7px 0 6px; display: flex; flex-direction: column; gap: 6px; flex: none; }
.card { background: #fafafa; border: 1px solid #d6d6d6; }
.card h4 { font-weight: 400; color: #555; padding: 6px 0 0 6px; height: 26px; font-size: 12px; }
.pages { height: 62px; }
.filters { height: 78px; }
.card.filters h4 { height: 32px; }
.marks { height: 395px; display: flex; flex-direction: column; position: relative; }
.card .marks-title { border-bottom: 1px solid #e0e0e0; height: 30px; }
.mark-row { height: 32px; display: flex; align-items: center; gap: 11px; padding: 0 0 1px 11px; border-bottom: 1px solid #e0e0e0; font-size: 13px; color: #333; flex: none; }
.mark-row.bold span { font-weight: 700; color: #111; }
.mark-row.bottom { border-bottom: 0; border-top: 1px solid #e0e0e0; margin-top: auto; }
.agg { letter-spacing: .5px; }
.pie-ic { width: 14px; height: 14px; }
.mark-select { margin: 5px 6px 0; height: 21px; border: 1px solid #d0d0d0; border-radius: 2px; display: flex; align-items: center; padding-left: 12px; background: #f6f6f6; color: #555; font-size: 11px; flex: none; }
.pie-small { width: 10px; height: 10px; margin-right: 8px; }
.ms-label { flex: 1; }
.ms-arrow { width: 18px; height: 19px; border-left: 1px solid #d0d0d0; display: flex; align-items: center; justify-content: center; }
.mark-buttons { margin: 6px 6px 0; display: grid; grid-template-columns: repeat(3, 1fr); gap: 6px; }
.mbtn { height: 42px; border: 1px solid #d6d6d6; display: flex; flex-direction: column; align-items: center; justify-content: flex-end; padding-bottom: 1px; font-size: 11px; color: #333; gap: 1px; }
.mb-ic { width: 16px; height: 16px; margin-bottom: 1px; }
.mb-ic.t { width: 13px; height: 13px; }
.encodings { margin: 9px 0 0 12px; display: flex; flex-direction: column; gap: 3px; }
.enc { display: flex; align-items: center; gap: 4px; }
.enc-ic { width: 15px; height: 15px; }
.enc-ic.t { width: 14px; height: 14px; margin: 0 1px 0 0; }
.pill { height: 20px; border-radius: 10px; color: #f0fbf8; display: flex; align-items: center; padding-left: 11px; flex: none; white-space: nowrap; }
.pill.blue { background: #4c96b4; }
.pill.green { background: #00b180; }
.enc .pill { width: 111px; padding-bottom: 2px; }
.pill.wide { width: 144px; margin-left: 4px; padding: 0 0 2px 10px; }

.workspace { width: 823px; flex: none; display: flex; flex-direction: column; }
.shelf { height: 27px; background: #fafafa; border: 1px solid #d6d6d6; display: flex; flex: none; }
.shelf.rows { margin-top: 7px; }
.shelf-label { width: 124px; border-right: 1px solid #d6d6d6; display: flex; align-items: center; gap: 8px; padding-left: 6px; color: #555; flex: none; }
.shelf-pills { display: flex; gap: 2px; padding: 3px 0 0 2px; letter-spacing: .35px; }
.joined-l { width: 148px; border-radius: 10px 0 0 10px; }
.joined-r { width: 148px; border-radius: 0 10px 10px 0; }
.viz { margin-top: 7px; height: 519px; background: #fff; outline: 1px solid #e0e0e0; outline-offset: -1px; flex: none; }
.viz-title { font: italic 22.2px "Open Sans", sans-serif; fill: #333; }
.viz-label text { font: 12px "Open Sans", sans-serif; fill: #333; text-anchor: middle; }

.tooltip { position: absolute; left: 59px; top: 5px; height: 19px; padding: 0 5px; background: #fff; border: 1px solid #767676; box-shadow: 2px 2px 2px #bbb; font-size: 11.6px; line-height: 17px; color: #555; z-index: 5; white-space: nowrap; }

.showme { position: absolute; left: 1159px; top: 0; width: 203px; height: 556px; background: #fafafa; border-left: 1px solid #e0e0e0; border-top: 1px solid #e0e0e0; box-shadow: 2px 0 2px #aaa, 0 2px 2px #bbb; padding: 14px 0 0 12px; z-index: 2; }
.thumbs { display: grid; grid-template-columns: repeat(3, 56px); gap: 4px; }
.thumb { width: 56px; height: 42px; background: #fff; outline: 1px solid #ddd; outline-offset: -1px; }
.thumb.selected { outline: 2px solid #e0662e; outline-offset: -2px; }
.tt text { font-size: 5px; fill: #777; }
.tt.pale text { fill: #bbb; }
.hint { margin: 18px 0 0 2px; height: 22px; color: #333; font-size: 11.5px; }
.hint b { font-weight: 700; color: #222; }
.need { display: flex; align-items: center; margin-left: 2px; gap: 4px; height: 20px; margin-bottom: 8px; color: #444; font-size: 11.5px; }
.need span { padding-top: 4px; }
.hint-pill { width: 90px; height: 20px; justify-content: center; padding: 0; font-size: 12px; }
.hint-pill.short { width: 76px; }

.tabs { height: 31px; background: #e6e6e6; border-top: 1px solid #d0d0d0; border-bottom: 1px solid #d4d4d4; display: flex; color: #666; }
.tab { width: 57px; border-right: 1px solid #cfcfcf; display: flex; align-items: center; justify-content: center; flex: none; white-space: nowrap; }
.tab.ds { width: 130px; justify-content: flex-start; padding-left: 10px; gap: 5px; }
.tab.active { width: 62px; background: #fafafa; font-weight: 700; color: #555; }
.tab.add { width: 32px; }

.status { height: 20px; background: #e9e9e9; display: flex; align-items: center; font-size: 11px; color: #333; }
.st-a { margin-left: 3px; width: 58px; }
.st-b { width: 106px; letter-spacing: -.3px; }
.st-c { width: 200px; white-space: nowrap; letter-spacing: .3px; }
.st-right { margin-left: auto; display: flex; height: 20px; align-items: center; }
.st-cell { height: 20px; border-left: 1px solid #d8d8d8; display: block; }
.c1 { width: 127px; } .c2 { width: 26px; } .c3 { width: 27px; } .c4 { width: 48px; }
.st-nav { width: 72px; height: 20px; border-left: 1px solid #d8d8d8; border-right: 1px solid #d8d8d8; display: flex; align-items: center; justify-content: center; }
.st-views { display: flex; align-items: center; gap: 5px; width: 66px; padding-left: 8px; }

.taskbar { height: 17px; background: linear-gradient(90deg, #21363f, #1c3340 50%, #162a3b); position: relative; overflow: hidden; }
.tb-win { position: absolute; left: 15px; top: 11px; }
.tb-view { position: absolute; left: 63px; top: 10px; }
.tb-ic { position: absolute; width: 24px; height: 24px; display: block; }
.edge { left: 111px; top: 8px; border-radius: 50%; background: radial-gradient(circle at 50% 70%, #1d6fc4 0 40%, #38b6d8 55%, #4fcf8a 100%); }
.chrome { left: 160px; top: 8px; border-radius: 50%; background: radial-gradient(circle, #4285f4 0 28%, #fff 28% 36%, transparent 36%), conic-gradient(#fbbc05 0 30%, #34a853 30% 62%, #ea4335 62%); }
.folder { left: 210px; top: 11px; width: 23px; background: linear-gradient(#e5ab2e 0 2px, #f6cf5a 2px); }
.store { left: 258px; top: 11px; background: #f2f2f2; }
.store::before { content: ""; position: absolute; left: 6px; top: -4px; width: 12px; height: 6px; border: 2px solid #29a3e0; border-bottom: 0; }
.mail { left: 307px; top: 9px; background: #1a6fb5; clip-path: polygon(50% 0, 100% 35%, 100% 100%, 0 100%, 0 35%); }
.red { left: 355px; top: 12px; background: linear-gradient(90deg, #d92a1c 0 45%, transparent 45% 55%, #d92a1c 55%); }
.darkred { left: 407px; top: 9px; width: 20px; height: 20px; border-radius: 50%; background: #201010; border: 2px solid #c0201c; }
.cone { left: 461px; top: 9px; width: 9px; background: #e8873a; clip-path: polygon(50% 0, 100% 100%, 0 100%); }
.tb-active { position: absolute; left: 491px; top: 0; width: 39px; height: 17px; background: #3b4e5c; }
.tb-tableau { position: absolute; left: 12px; top: 6px; width: 22px; height: 20px; background: #e8eef4; display: block; }
.tb-sun { position: absolute; left: 1030px; top: 9px; width: 20px; height: 20px; border-radius: 50%; background: #f3a51e; }
.tb-temp { position: absolute; left: 1058px; top: 9px; color: #fff; font-size: 12px; line-height: 14px; }
.tb-clock { position: absolute; left: 1257px; top: 4px; color: #fff; font-size: 12px; line-height: 13px; white-space: nowrap; }
.tb-note { position: absolute; left: 1325px; top: 12px; }
```
